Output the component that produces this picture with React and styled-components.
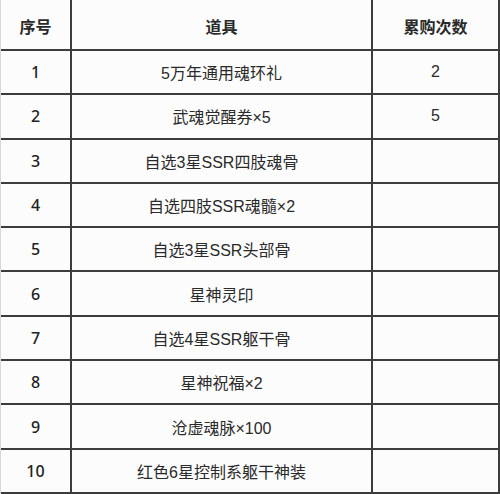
import React from "react";
import styled, { createGlobalStyle } from "styled-components";

const Global = createGlobalStyle`
  html, body { margin: 0; padding: 0; background: #fcfcfc; }
  body { font-family: "Liberation Sans", "Noto Sans CJK SC", sans-serif; }
`;

const Grid = styled.div`
  display: grid;
  grid-template-columns: 71px 301px 127px;
  grid-template-rows: 51px repeat(10, 44.3px);
  width: 499px;
  border-left: 1px solid #d8d8d8;
  background: #fcfcfc;
  color: #2a2a2a;
`;

const Cell = styled.div`
  box-sizing: border-box;
  display: flex;
  align-items: center;
  justify-content: center;
  border-right: 2px solid #3c3c3c;
  border-bottom: 2px solid #3c3c3c;
  font-size: 16px;
  font-weight: ${(p) => (p.$head ? 600 : 400)};
  padding-top: ${(p) => (p.$head ? "3px" : "0")};
  white-space: nowrap;
`;

const IndexCell = styled(Cell)`
  font-family: "Noto Sans", "Liberation Sans", sans-serif;
  font-weight: 500;
  font-size: 16px;
  color: #222;
`;

const rows = [
  ["1", "5万年通用魂环礼", "2"],
  ["2", "武魂觉醒券×5", "5"],
  ["3", "自选3星SSR四肢魂骨", ""],
  ["4", "自选四肢SSR魂髓×2", ""],
  ["5", "自选3星SSR头部骨", ""],
  ["6", "星神灵印", ""],
  ["7", "自选4星SSR躯干骨", ""],
  ["8", "星神祝福×2", ""],
  ["9", "沧虚魂脉×100", ""],
  ["10", "红色6星控制系躯干神装", ""],
];

export default function App() {
  return (
    <>
      <Global />
      <Grid>
        <Cell $head>序号</Cell>
        <Cell $head>道具</Cell>
        <Cell $head>累购次数</Cell>
        {rows.map((r) => (
          <React.Fragment key={r[0]}>
            <IndexCell>{r[0]}</IndexCell>
            <Cell>{r[1]}</Cell>
            <Cell>{r[2]}</Cell>
          </React.Fragment>
        ))}
      </Grid>
    </>
  );
}
